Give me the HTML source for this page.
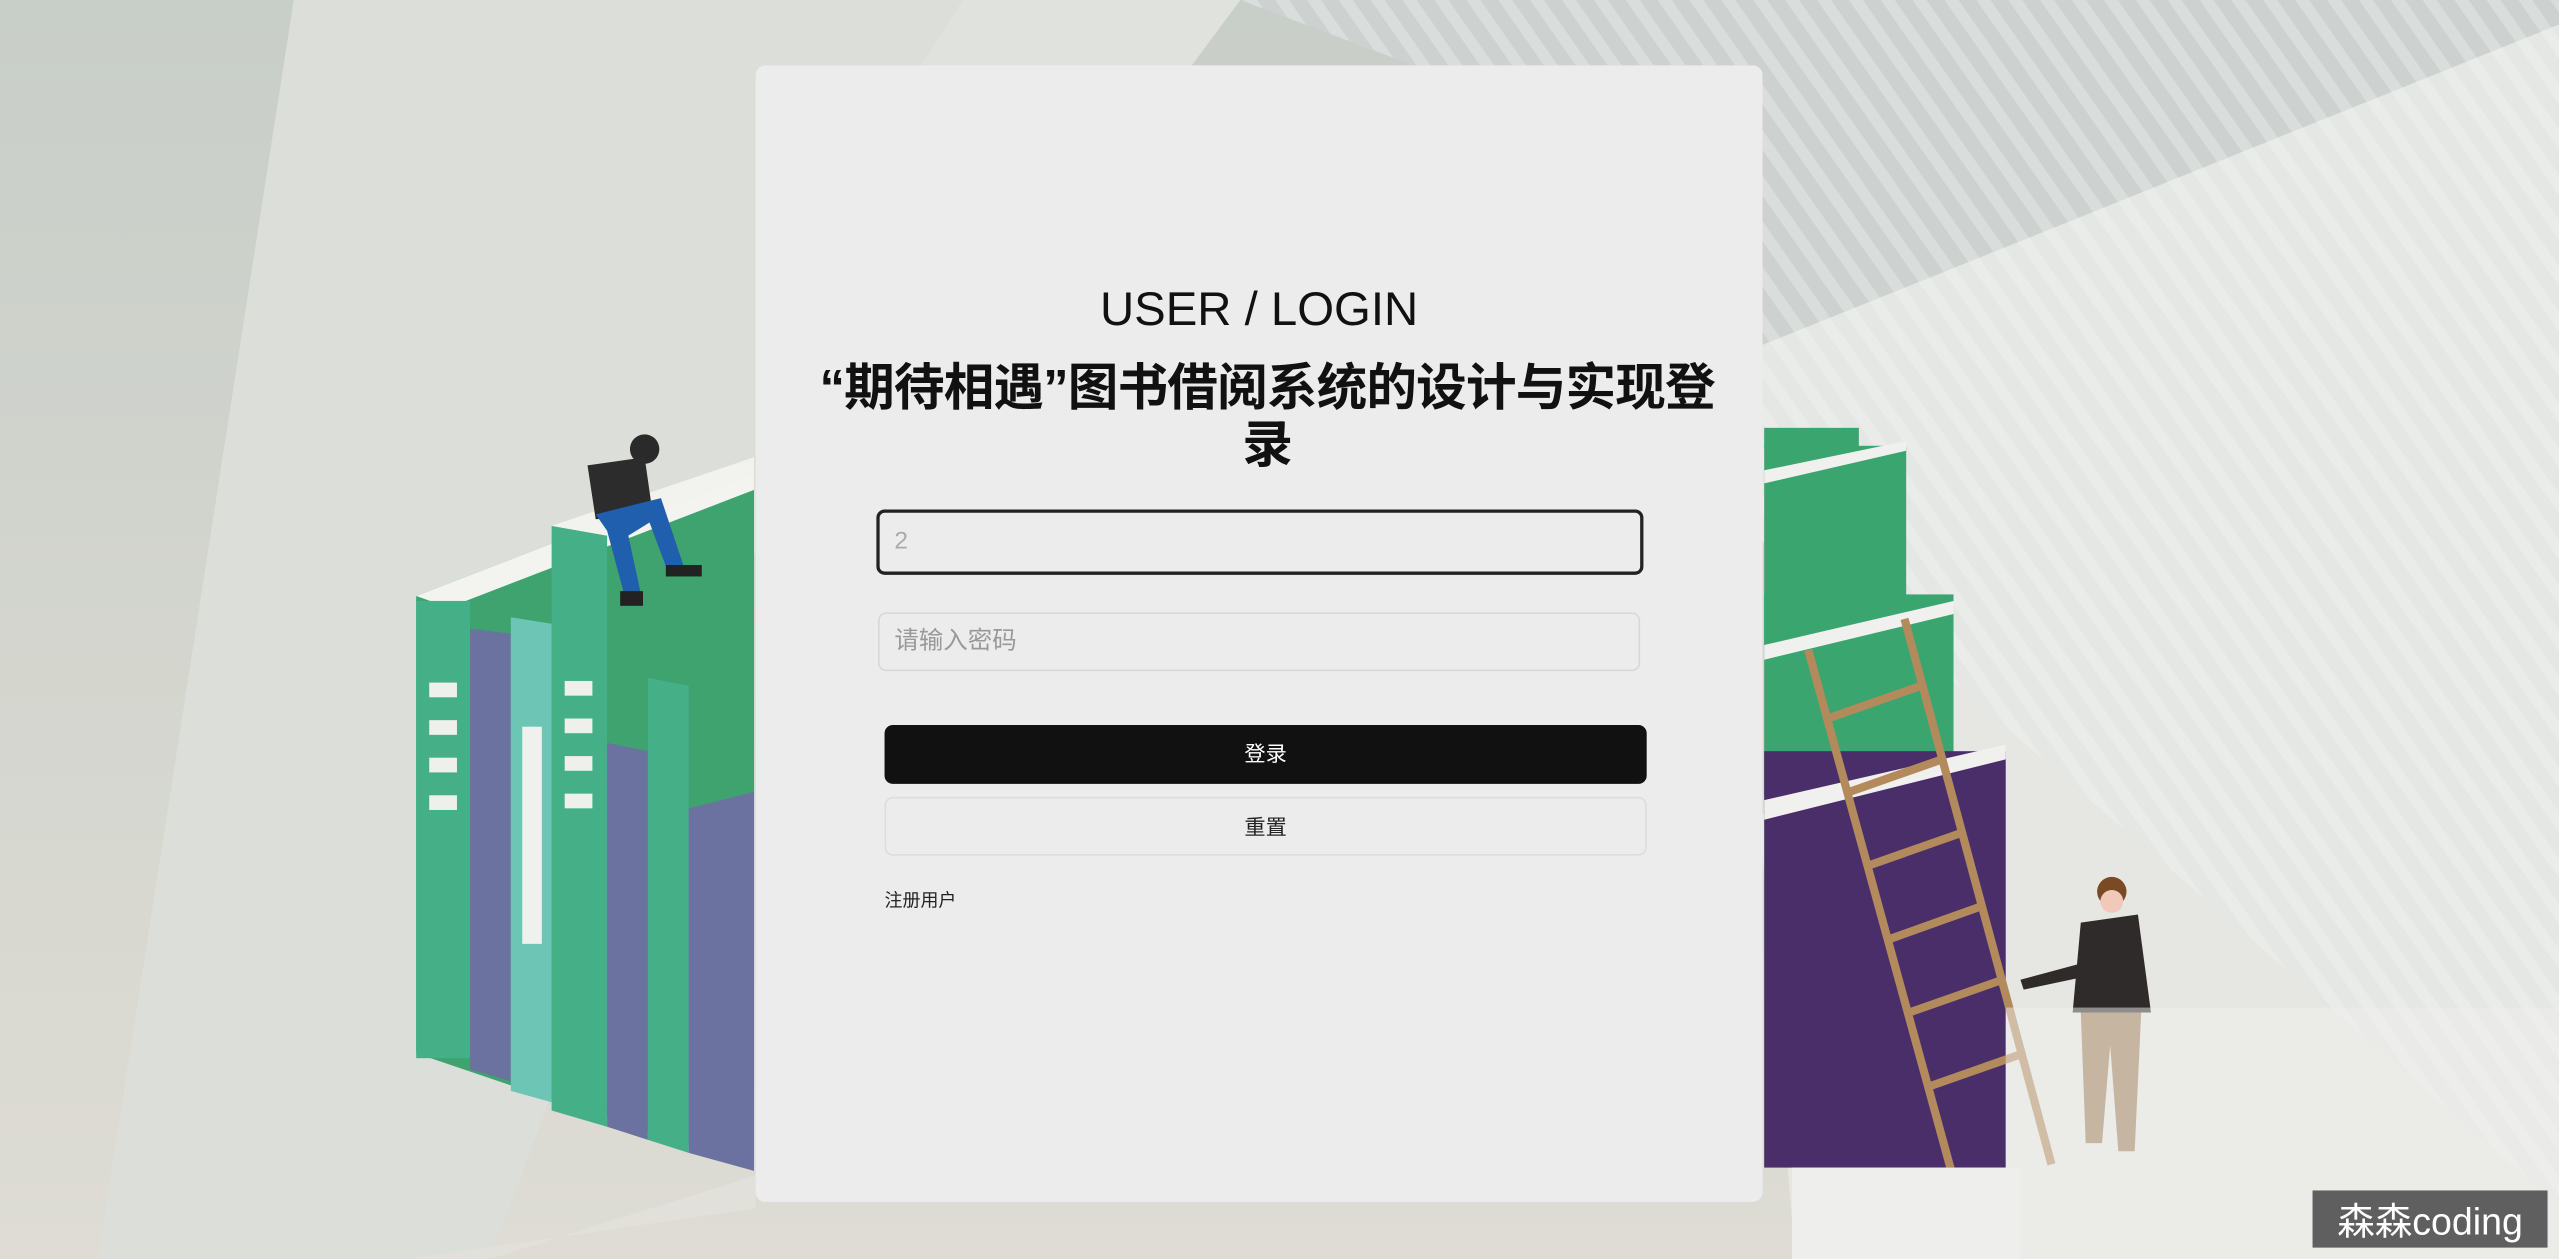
<!DOCTYPE html>
<html><head><meta charset="utf-8"><style>
html,body{margin:0;padding:0;width:2559px;height:1259px;overflow:hidden;background:#d6d9d5}
#s{position:absolute;left:0;top:0;width:1568px;height:771px;transform:scale(1.632,1.633);transform-origin:0 0;overflow:hidden;font-family:"Liberation Sans","Noto Sans CJK SC",sans-serif}
.card{position:absolute;left:463px;top:40px;width:617px;height:696px;background:#ececec;border-radius:6px}
.t1{position:absolute;left:0;width:617px;top:130px;text-align:center;font-size:29px;color:#111;line-height:40px}
.t2{position:absolute;left:35px;width:557px;top:180px;text-align:center;font-size:31px;font-weight:bold;color:#111;line-height:35px;letter-spacing:-0.5px}
.in{position:absolute;box-sizing:border-box;border-radius:5px;font-size:15px;color:#999;padding-left:9px}
.btn{position:absolute;box-sizing:border-box;left:79px;width:467px;height:36px;border-radius:5px;text-align:center;line-height:36px;font-size:13px}
</style></head><body><div id="s">
<svg width="1568" height="771" style="position:absolute;left:0;top:0">
<defs>
<pattern id="st" width="16" height="16" patternUnits="userSpaceOnUse" patternTransform="rotate(-35)"><rect width="16" height="16" fill="#cdd2d1"/><rect width="7" height="16" fill="#d9dddc"/></pattern>
<pattern id="st2" width="16" height="16" patternUnits="userSpaceOnUse" patternTransform="rotate(-35)"><rect width="16" height="16" fill="#e4e7e4"/><rect width="7" height="16" fill="#eaece9"/></pattern>
<linearGradient id="lg" x1="0" y1="0" x2="0" y2="1"><stop offset="0" stop-color="#c8cec8"/><stop offset="1" stop-color="#dedcd4"/></linearGradient>
</defs>
<rect width="1568" height="771" fill="url(#lg)"/>
<polygon points="180,0 590,0 300,771 60,771" fill="#dcdfd9"/>
<polygon points="590,0 760,0 463,400 463,200" fill="#e0e2de"/>
<polygon points="760,0 1568,0 1568,15 1078,212 1078,120" fill="url(#st)"/>
<polygon points="1078,212 1568,15 1568,738 1197,418 1078,330" fill="url(#st2)"/>
<polygon points="1078,500 1197,418 1568,738 1568,771 1100,771" fill="#e6e6e3"/>
<polygon points="60,771 300,771 463,720 463,740 250,771" fill="#e2e0da"/>
<polygon points="255,365 462,285 462,715 255,645" fill="#3ea36e"/>
<polygon points="255,365 462,285 462,300 275,372" fill="#f3f3f0"/>
<rect x="255" y="368" width="33" height="280" fill="#45b088"/>
<polygon points="288,385 313,388 313,662 288,655" fill="#6b72a0"/>
<polygon points="313,378 338,382 338,675 313,668" fill="#6cc5b5"/>
<rect x="320" y="445" width="12" height="133" fill="#eef1ee"/>
<polygon points="338,322 372,328 372,690 338,680" fill="#45b088"/>
<polygon points="338,322 462,280 462,290 372,328" fill="#f2f2ef"/>
<polygon points="372,455 397,460 397,698 372,690" fill="#6b72a0"/>
<polygon points="397,415 422,420 422,706 397,698" fill="#45b088"/>
<polygon points="422,495 462,485 462,717 422,706" fill="#6b72a0"/>
<g fill="#eef0ec"><rect x="263" y="418" width="17" height="9"/><rect x="263" y="441" width="17" height="9"/><rect x="263" y="464" width="17" height="9"/><rect x="263" y="487" width="17" height="9"/><rect x="346" y="417" width="17" height="9"/><rect x="346" y="440" width="17" height="9"/><rect x="346" y="463" width="17" height="9"/><rect x="346" y="486" width="17" height="9"/></g>
<circle cx="395" cy="275" r="9" fill="#2a2a2a"/>
<path d="M360,285 L395,280 L400,315 L365,318 Z" fill="#2c2c2c"/>
<path d="M365,315 L405,305 L420,350 L410,352 L398,320 L385,328 L393,365 L383,366 L372,325 Z" fill="#1f5fae"/>
<rect x="408" y="346" width="22" height="7" fill="#222"/><rect x="380" y="362" width="14" height="9" fill="#222"/>
<rect x="1081" y="273" width="87" height="125" fill="#3aa56f"/>
<rect x="1081" y="262" width="58" height="12" fill="#3aa56f"/>
<polygon points="1081,288 1168,270 1168,276 1081,296" fill="#f0f0ee"/>
<rect x="1081" y="364" width="116" height="123" fill="#3aa56f"/>
<polygon points="1081,395 1197,368 1197,376 1081,404" fill="#f0f0ee"/>
<rect x="1081" y="460" width="148" height="255" fill="#4a2e6a"/>
<polygon points="1081,490 1229,456 1229,465 1081,502" fill="#f0f0ee"/>
<g stroke="#b38a5c" stroke-width="5" fill="none"><line x1="1108" y1="398" x2="1200" y2="733"/><line x1="1167" y1="379" x2="1257" y2="713"/>
<line x1="1120" y1="440" x2="1177" y2="420"/><line x1="1133" y1="485" x2="1190" y2="465"/><line x1="1145" y1="530" x2="1202" y2="510"/><line x1="1158" y1="575" x2="1214" y2="555"/><line x1="1170" y1="620" x2="1227" y2="600"/><line x1="1183" y1="665" x2="1240" y2="645"/></g>
<circle cx="1294" cy="546" r="9" fill="#7a4a25"/><circle cx="1294" cy="552" r="7" fill="#f2c9b8"/>
<path d="M1275,565 L1310,560 L1318,620 L1270,620 Z" fill="#2e2b2a"/>
<path d="M1238,600 L1275,590 L1278,598 L1240,606 Z" fill="#2e2b2a"/>
<path d="M1275,620 L1312,620 L1308,705 L1298,705 L1293,640 L1288,700 L1278,700 Z" fill="#9c7a53"/>
<rect x="1229" y="617" width="339" height="154" fill="#f0f0ee" opacity="0.5"/>
<rect x="1098" y="715" width="140" height="56" fill="#eeeeec"/>
</svg>
<div class="card">
<div class="t1">USER / LOGIN</div>
<div class="t2">“期待相遇”图书借阅系统的设计与实现登录</div>
<div class="in" style="left:74px;top:272px;width:470px;height:40px;border:2px solid #222;line-height:36px;color:#aaa">2</div>
<div class="in" style="left:75px;top:335px;width:467px;height:36px;border:1px solid #d8d8d8;line-height:34px">请输入密码</div>
<div class="btn" style="top:404px;background:#111;color:#fff">登录</div>
<div class="btn" style="top:448px;border:1px solid #ddd;color:#222">重置</div>
<div style="position:absolute;left:79px;top:503px;font-size:11px;color:#222">注册用户</div>
</div>
<div style="position:absolute;left:1417px;top:729px;width:144px;height:35px;background:#5f5f5f;color:#fff;font-size:23px;line-height:38px;text-align:center">森森coding</div>
</div></body></html>
